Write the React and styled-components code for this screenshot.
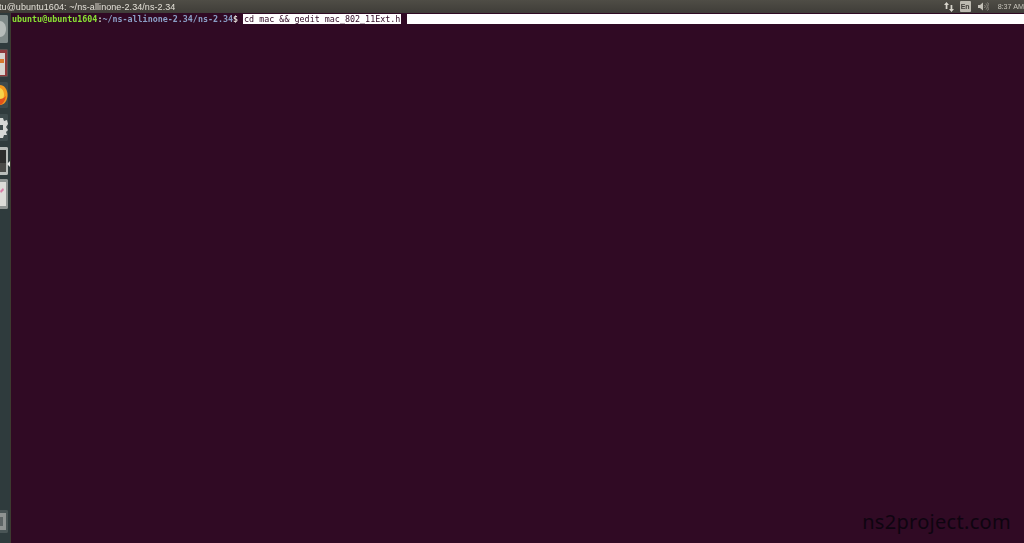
import React from 'react'
import styled, { createGlobalStyle } from 'styled-components'

const GlobalStyle = createGlobalStyle`
  html, body {
    margin: 0;
    padding: 0;
    height: 100%;
    overflow: hidden;
    background: #300a24;
  }
`

const Root = styled.div`
  position: relative;
  display: flex;
  flex-direction: column;
  width: 1024px;
  height: 543px;
  overflow: hidden;
`

const TopBar = styled.header`
  display: flex;
  align-items: center;
  justify-content: space-between;
  flex: none;
  height: 13px;
  background: linear-gradient(#4f4d46, #3f3d38);
  color: #d8d5cc;
  font-family: "Liberation Sans", sans-serif;
  font-size: 9px;
  white-space: nowrap;
`

const Title = styled.span`
  margin-left: -1px;
  font-weight: 400;
  letter-spacing: .07px;
  color: #e4e1d8;
  filter: blur(.3px);
`

const Tray = styled.div`
  display: flex;
  align-items: center;
  height: 100%;
  filter: blur(.35px);
`

const LangBadge = styled.span`
  display: flex;
  align-items: center;
  justify-content: center;
  width: 11px;
  height: 11px;
  margin: 0 7px 0 6px;
  border-radius: 1px;
  background: #bdbab0;
  color: #3f3d38;
  font-size: 7px;
  font-weight: 700;
`

const Clock = styled.span`
  margin-left: 9px;
  font-size: 7.2px;
  color: #c8c5bc;
`

const Body = styled.div`
  display: flex;
  flex: 1;
  min-height: 0;
`

const Launcher = styled.aside`
  position: relative;
  display: flex;
  flex-direction: column;
  flex: none;
  width: 11px;
  padding-top: 2px;
  overflow: hidden;
  background: #2f3b3d;
  border-right: 1px solid #3c3a30;
  box-sizing: border-box;
  filter: blur(.5px);
`

const Tile = styled.div`
  flex: none;
  display: flex;
  align-items: center;
  justify-content: flex-end;
  width: 8px;
  height: ${p => p.$h}px;
  margin-top: ${p => p.$gap || 0}px;
  border-radius: 0 2px 2px 0;
  background: ${p => p.$bg};
  overflow: hidden;
`

const BottomTile = styled(Tile)`
  margin-top: auto;
  margin-bottom: 10px;
`

const ActiveMark = styled.span`
  position: absolute;
  top: 148px;
  right: 0;
  width: 0;
  height: 0;
  border-top: 3px solid transparent;
  border-bottom: 3px solid transparent;
  border-right: 3px solid #e8e8e8;
`

const Terminal = styled.main`
  position: relative;
  flex: 1;
  padding: 1px 0 0 1px;
  background: #300a24;
  color: #e6e1dc;
  font-family: "DejaVu Sans Mono", "Liberation Mono", monospace;
  font-size: 8.36px;
  font-weight: 700;
  line-height: 10px;
`

const CommandLine = styled.div`
  display: flex;
  white-space: nowrap;
  filter: blur(.3px);
`

const UserHost = styled.span`
  color: #8ae234;
`

const Path = styled.span`
  color: #8b9fc6;
`

const Prompt = styled.span`
  color: #dcd8d2;
`

const Selected = styled.span`
  margin-left: 5px;
  padding: 0 1px;
  background: #fff;
  color: #300a24;
  font-weight: 400;
  font-size: 8.4px;
`

const Cursor = styled.span`
  width: 2px;
  background: #300a24;
`

const Highlight = styled.span`
  flex: 1;
  margin-left: 4px;
  background: #fff;
`

const Watermark = styled.span`
  position: absolute;
  right: 13px;
  bottom: 9px;
  color: #0e0410;
  font-family: "Noto Sans", sans-serif;
  font-size: 20px;
  font-weight: 400;
  letter-spacing: .3px;
  line-height: 24px;
`

const ArrowsIcon = () => (
  <svg width="10" height="10" viewBox="0 0 10 10" fill="#d8d5cc">
    <path d="M2.5 0 5 3H3.4v4H1.7V3H0zM7.5 10 5 7h1.6V3h1.7v4H10z" />
  </svg>
)

const SpeakerIcon = () => (
  <svg width="11" height="9" viewBox="0 0 11 9" fill="none" stroke="#8f8c84" strokeWidth="1">
    <path d="M0 3h2l3-2.5v8L2 6H0z" fill="#c4c1b8" stroke="none" />
    <path d="M6.5 3a2 2 0 0 1 0 3M8 1.5a4 4 0 0 1 0 6M9.5.5a5.5 5.5 0 0 1 0 8" />
  </svg>
)

const SearchGlyph = () => (
  <svg width="8" height="28" viewBox="0 0 8 28">
    <rect width="8" height="28" fill="#7f8a89" />
    <path d="M0 6c3 0 6 3 6 8s-3 8-6 8z" fill="#b6bcba" />
  </svg>
)

const FilesGlyph = () => (
  <svg width="8" height="28" viewBox="0 0 8 28">
    <rect width="8" height="28" fill="#5b5151" />
    <rect y="1" width="7" height="26" fill="#8e3a3c" />
    <rect y="4" width="5" height="22" fill="#d8d5d0" />
    <rect y="10" width="4" height="4" fill="#d8782f" />
  </svg>
)

const FirefoxGlyph = () => (
  <svg width="8" height="26" viewBox="0 0 8 26">
    <rect width="8" height="26" fill="#3d4a4c" />
    <path d="M0 3c4 0 7.5 4 7.5 10S4 23 0 23z" fill="#f29a1f" />
    <path d="M0 6c3 1 4 4 4 7s-2 6-4 7z" fill="#f7d34a" />
    <path d="M0 17c2 0 4-1 6-3-1 5-3 8-6 9z" fill="#e2521c" />
  </svg>
)

const GearGlyph = () => (
  <svg width="8" height="27" viewBox="0 0 8 27">
    <rect width="8" height="27" fill="#3e4b4d" />
    <path d="M0 4h3l1 3 3-1 1 4-2 3 2 3-2 2 1 3-3 0-1 3H0z" fill="#d5d8d6" />
    <rect y="11" width="3" height="5" fill="#3e4b4d" />
  </svg>
)

const TerminalGlyph = () => (
  <svg width="8" height="28" viewBox="0 0 8 28">
    <rect width="8" height="28" fill="#b9bdbb" />
    <rect y="3" width="6" height="22" fill="#2c2c2c" />
    <rect y="16" width="6" height="9" fill="#4a4a48" />
  </svg>
)

const WriterGlyph = () => (
  <svg width="8" height="30" viewBox="0 0 8 30">
    <rect width="8" height="30" fill="#8f9594" />
    <rect y="3" width="6" height="24" fill="#dcdcd9" />
    <path d="M0 12l3-3 1 2-3 3z" fill="#d77ca6" />
  </svg>
)

const TrashGlyph = () => (
  <svg width="8" height="23" viewBox="0 0 8 23">
    <rect width="8" height="23" fill="#4a5556" />
    <rect y="3" width="6" height="17" fill="#8f9392" />
    <rect y="7" width="3" height="9" fill="#5d6465" />
  </svg>
)

const App = () => (
  <Root>
    <GlobalStyle />
    <TopBar>
      <Title>tu@ubuntu1604: ~/ns-allinone-2.34/ns-2.34</Title>
      <Tray>
        <ArrowsIcon />
        <LangBadge>En</LangBadge>
        <SpeakerIcon />
        <Clock>8:37 AM</Clock>
      </Tray>
    </TopBar>
    <Body>
      <Launcher>
        <Tile $h={28} $bg="#7f8a89"><SearchGlyph /></Tile>
        <Tile $h={28} $gap={6} $bg="#5b5151"><FilesGlyph /></Tile>
        <Tile $h={26} $gap={5} $bg="#3d4a4c"><FirefoxGlyph /></Tile>
        <Tile $h={27} $gap={6} $bg="#3e4b4d"><GearGlyph /></Tile>
        <Tile $h={28} $gap={6} $bg="#b9bdbb"><TerminalGlyph /></Tile>
        <Tile $h={30} $gap={4} $bg="#8f9594"><WriterGlyph /></Tile>
        <BottomTile $h={23} $bg="#4a5556"><TrashGlyph /></BottomTile>
        <ActiveMark />
      </Launcher>
      <Terminal>
        <CommandLine>
          <UserHost>ubuntu@ubuntu1604</UserHost>
          <Prompt>:</Prompt>
          <Path>~/ns-allinone-2.34/ns-2.34</Path>
          <Prompt>$</Prompt>
          <Selected>cd mac &amp;&amp; gedit mac_802_11Ext.h</Selected>
          <Cursor />
          <Highlight />
        </CommandLine>
        <Watermark>ns2project.com</Watermark>
      </Terminal>
    </Body>
  </Root>
)

export default App
